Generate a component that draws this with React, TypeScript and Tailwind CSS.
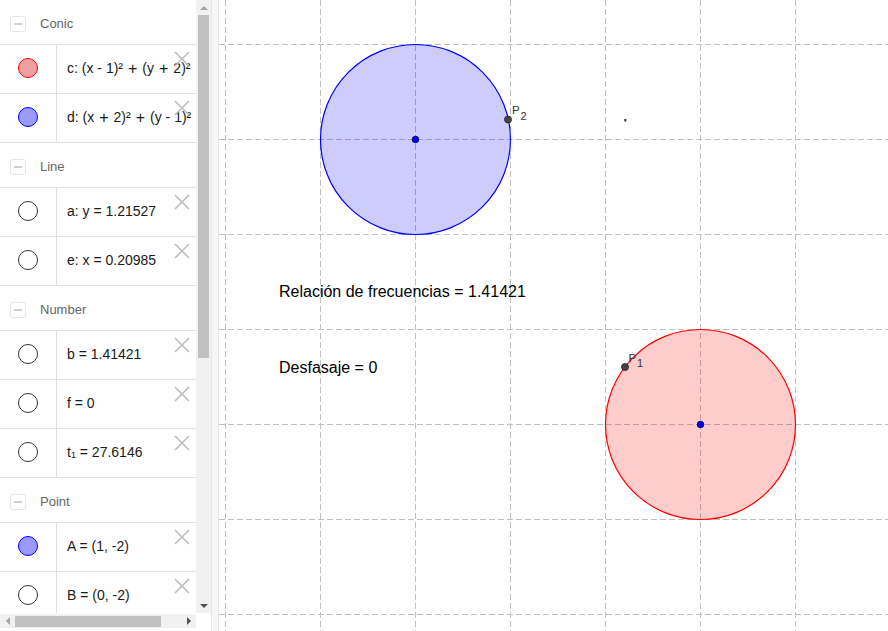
import React from "react";

type Item = { kind: "empty" | "red" | "blue"; text: React.ReactNode };
type Group = { title: string; items: Item[] };

const Op = ({ c }: { c: string }) => <span className="mx-[5px] text-[16px] leading-none">{c}</span>;

const groups: Group[] = [
  {
    title: "Conic",
    items: [
      {
        kind: "red",
        text: (
          <>
            c: (x - 1)²<Op c="+" />(y<Op c="+" />2)²<Op c="=" />9
          </>
        ),
      },
      {
        kind: "blue",
        text: (
          <>
            d: (x<Op c="+" />2)²<Op c="+" />(y - 1)²<Op c="=" />9
          </>
        ),
      },
    ],
  },
  {
    title: "Line",
    items: [
      { kind: "empty", text: "a: y = 1.21527" },
      { kind: "empty", text: "e: x = 0.20985" },
    ],
  },
  {
    title: "Number",
    items: [
      { kind: "empty", text: "b = 1.41421" },
      { kind: "empty", text: "f = 0" },
      {
        kind: "empty",
        text: (
          <>
            t<span className="text-[9px] relative top-[3px]">1</span>
            {"\u00a0= 27.6146"}
          </>
        ),
      },
    ],
  },
  {
    title: "Point",
    items: [
      { kind: "blue", text: "A = (1, -2)" },
      { kind: "empty", text: "B = (0, -2)" },
    ],
  },
];

function Marble({ kind }: { kind: Item["kind"] }) {
  const cls =
    kind === "red"
      ? "bg-[#f0a0a0] border-[#f00000]"
      : kind === "blue"
      ? "bg-[#9999ff] border-[#0000ff]"
      : "bg-white border-[#333]";
  return <div className={`w-[20px] h-[20px] rounded-full border ${cls}`} />;
}

function XIcon() {
  return (
    <svg width="16" height="16" viewBox="0 0 16 16" className="absolute left-[174px] top-[6px]">
      <path d="M1 1 L15 15 M15 1 L1 15" stroke="#bdbdbd" strokeWidth="1.6" />
    </svg>
  );
}

function Header({ title }: { title: string }) {
  return (
    <div className="h-[45px] pt-[4px] border-b border-[#e0e0e0] flex items-center shrink-0">
      <div className="ml-[10px] w-[16px] h-[16px] rounded-[3px] border border-[#e6e6e6] flex items-center justify-center">
        <div className="w-[8px] h-[2px] bg-[#cfcfcf]" />
      </div>
      <span className="ml-[14px] text-[13px] text-[#666]">{title}</span>
    </div>
  );
}

function Row({ item }: { item: Item }) {
  return (
    <div className="h-[49px] border-b border-[#e0e0e0] flex relative shrink-0">
      <div className="w-[57px] pb-[2px] border-r border-[#e0e0e0] flex items-center justify-center">
        <Marble kind={item.kind} />
      </div>
      <div className="flex-1 flex items-center pl-[10px] pb-[1px] whitespace-nowrap overflow-hidden text-[14px] text-[#1a1a1a]">
        {item.text}
      </div>
      <XIcon />
    </div>
  );
}

function VScroll() {
  return (
    <div className="w-[15px] h-[613px] bg-[#f1f1f1] flex flex-col items-center">
      <div className="h-[15px] flex items-center justify-center">
        <div className="w-0 h-0 border-l-[4px] border-r-[4px] border-b-[4px] border-l-transparent border-r-transparent border-b-[#a3a3a3]" />
      </div>
      <div className="w-[11px] h-[343px] bg-[#c1c1c1]" />
      <div className="flex-1" />
      <div className="h-[15px] flex items-center justify-center">
        <div className="w-0 h-0 border-l-[4px] border-r-[4px] border-t-[4px] border-l-transparent border-r-transparent border-t-[#505050]" />
      </div>
    </div>
  );
}

function HScroll() {
  return (
    <div className="w-[196px] h-[14px] bg-[#f1f1f1] flex items-center">
      <div className="w-[15px] flex items-center justify-center">
        <div className="w-0 h-0 border-t-[4px] border-b-[4px] border-r-[4px] border-t-transparent border-b-transparent border-r-[#a3a3a3]" />
      </div>
      <div className="w-[146px] h-[11px] bg-[#c1c1c1]" />
      <div className="flex-1" />
      <div className="w-[15px] flex items-center justify-center">
        <div className="w-0 h-0 border-t-[4px] border-b-[4px] border-l-[4px] border-t-transparent border-b-transparent border-l-[#505050]" />
      </div>
    </div>
  );
}

function Canvas() {
  const xs = [225.5, 320.5, 415.5, 510.5, 605.5, 700.5, 795.5];
  const ys = [44.5, 139.5, 234.5, 329.5, 424.5, 519.5, 614.5];
  return (
    <svg
      className="block"
      width="669"
      height="631"
      viewBox="219 0 669 631"
      style={{ fontFamily: '"Liberation Sans", Arial, sans-serif' }}
    >
      <rect x="219" y="0" width="669" height="631" fill="#ffffff" />
      {xs.map((x) => (
        <line key={"v" + x} x1={x} y1={0} x2={x} y2={631} stroke="#c0c0c0" strokeWidth="1" strokeDasharray="6 3" />
      ))}
      {ys.map((y) => (
        <line key={"h" + y} x1={219} y1={y} x2={888} y2={y} stroke="#c0c0c0" strokeWidth="1" strokeDasharray="6 3" />
      ))}
      <circle cx="415.5" cy="139.5" r="95" fill="rgba(0,0,255,0.2)" stroke="#0000ff" strokeWidth="1.2" />
      <circle cx="700.5" cy="424.5" r="95" fill="rgba(255,0,0,0.2)" stroke="#ff0000" strokeWidth="1.2" />
      <circle cx="415.5" cy="139.5" r="3.3" fill="#0000ff" stroke="#000040" strokeWidth="0.8" />
      <circle cx="700.5" cy="424.5" r="3.3" fill="#0000ff" stroke="#000040" strokeWidth="0.8" />
      <circle cx="508" cy="119.5" r="3.5" fill="#444" stroke="#222" strokeWidth="0.8" />
      <circle cx="625" cy="367" r="3.5" fill="#444" stroke="#222" strokeWidth="0.8" />
      <rect x="624.3" y="119" width="2" height="2.5" fill="#333" />
      <text x="512" y="114" fontSize="11.5" fill="#333">P</text>
      <text x="520.5" y="119.5" fontSize="11" fill="#333">2</text>
      <text x="628.5" y="361.5" fontSize="11.5" fill="#333">P</text>
      <text x="637" y="366.5" fontSize="11" fill="#333">1</text>
      <text x="279" y="297" fontSize="16" fill="#000">Relación de frecuencias = 1.41421</text>
      <text x="279" y="372.5" fontSize="16" fill="#000">Desfasaje = 0</text>
    </svg>
  );
}

export default function App() {
  return (
    <div
      className="w-[888px] h-[631px] bg-white flex overflow-hidden"
      style={{ fontFamily: '"Liberation Sans", Arial, sans-serif' }}
    >
      <div className="w-[211px] h-[631px] flex flex-col">
        <div className="flex h-[613px]">
          <div className="w-[196px] h-[613px] overflow-hidden flex flex-col">
            {groups.map((g) => (
              <React.Fragment key={g.title}>
                <Header title={g.title} />
                {g.items.map((it, i) => (
                  <Row key={i} item={it} />
                ))}
              </React.Fragment>
            ))}
          </div>
          <VScroll />
        </div>
        <div className="h-[1px]" />
        <HScroll />
      </div>
      <div className="w-[8px] h-[631px] bg-[#f6f6f6] border-l border-[#e8e8e8] border-r border-[#d8d8d8]" />
      <Canvas />
    </div>
  );
}
